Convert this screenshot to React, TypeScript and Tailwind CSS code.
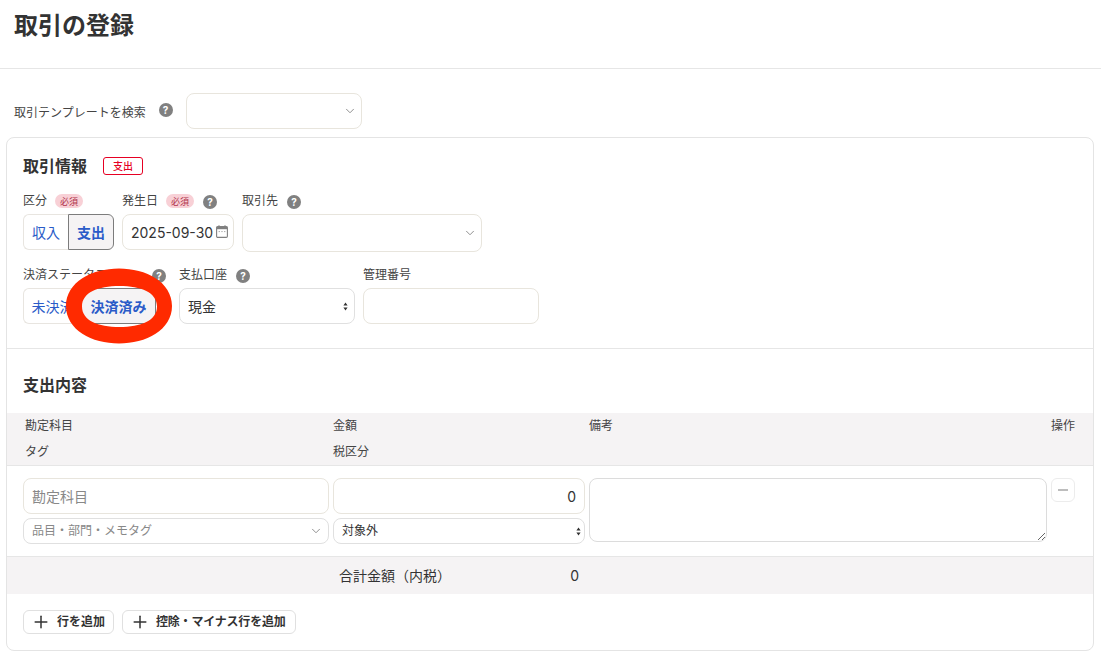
import { ChevronDown, Plus } from "lucide-react";

const Help = (props: { className?: string }) => {
    return (
        <span className={"flex h-[14px] w-[14px] shrink-0 items-center justify-center rounded-full bg-[#808080] text-[10px] font-bold leading-none text-white " + (props.className ?? "")}>?</span>
    )
}

const Required = () => {
    return <span className="flex h-[14px] w-[28px] items-center justify-center rounded-full bg-[#f8d0d6] text-[9px] leading-none text-[#b0324a]">必須</span>
}

const Updown = () => {
    return (
        <svg width="5" height="9" viewBox="0 0 5 9" className="shrink-0">
            <path d="M2.5 0.5 L4.6 3.5 H0.4 Z M2.5 8.5 L0.4 5.5 H4.6 Z" fill="#333" />
        </svg>
    )
}

const Calendar = () => {
    return (
        <svg width="12" height="13" viewBox="0 0 12 13" className="absolute right-[5px] top-[10px]" fill="none">
            <rect x="0.6" y="1.6" width="10.8" height="10.8" rx="1.2" stroke="#808080" strokeWidth="1.1" />
            <rect x="0.6" y="1.6" width="10.8" height="2.6" fill="#808080" />
            <path d="M3 0.3v2M9 0.3v2" stroke="#808080" strokeWidth="1.1" />
            <path d="M2.6 6.6h1.4M5.3 6.6h1.4M8 6.6h1.4" stroke="#aaa" strokeWidth="1" />
        </svg>
    )
}

const Segment = (props: { left: string, right: string, leftW: string, rightW: string }) => {
    return (
        <div className="flex h-[36px] text-[14px] text-[#2a5bc8]">
            <div className={"flex items-center justify-center rounded-l-[6px] border border-r-0 border-[#e8e5e0] bg-white " + props.leftW}>{props.left}</div>
            <div className={"flex items-center justify-center rounded-r-[6px] border border-[#7c7c7c] bg-[#f5f3f4] font-bold " + props.rightW}>{props.right}</div>
        </div>
    )
}

const Label = (props: { text: string, required?: boolean, help?: boolean, w: string }) => {
    return (
        <div className={"flex h-[14px] items-center text-[12px] leading-none text-[#444] " + props.w}>
            <span>{props.text}</span>
            {props.required && <span className="ml-[8px]"><Required /></span>}
            {props.help && <Help className="ml-[9px] mt-[2px]" />}
        </div>
    )
}

const App = () => {
    return (
        <div className="relative h-[662px] w-[1101px] overflow-hidden bg-white text-[#333]" style={{ fontFamily: 'Inter, "Noto Sans CJK JP", sans-serif' }}>
            <div className="h-[69px] border-b border-[#e6e6e6] pl-[14px] pt-[9px]">
                <h1 className="text-[24px] font-bold leading-[34px] text-[#333]">取引の登録</h1>
            </div>

            <div className="mt-[24px] flex h-[36px] items-center pl-[14px]">
                <span className="mt-[4px] text-[12px] text-[#444]">取引テンプレートを検索</span>
                <Help className="ml-[13px] mt-[-2px]" />
                <div className="ml-[13px] flex h-[36px] w-[176px] items-center justify-end rounded-[8px] border border-[#e8e5dd] pr-[4px]">
                    <ChevronDown size={14} strokeWidth={1.5} color="#808080" />
                </div>
            </div>

            <div className="ml-[6px] mt-[8px] h-[514px] w-[1088px] rounded-[8px] border border-[#e4e4e4]">
                <div className="h-[211px] border-b border-[#e6e6e6] pl-[16px] pt-[17px]">
                    <div className="flex h-[22px] items-center">
                        <span className="text-[16px] font-bold leading-none">取引情報</span>
                        <span className="ml-[16px] flex h-[18px] w-[40px] items-center justify-center rounded-[3px] border border-[#e60023] text-[10px] font-medium leading-none text-[#e60023]">支出</span>
                    </div>

                    <div className="mt-[17px] flex">
                        <Label text="区分" required w="w-[99px]" />
                        <Label text="発生日" required help w="w-[120px]" />
                        <Label text="取引先" help w="w-[200px]" />
                    </div>
                    <div className="mt-[6px] flex h-[36px] items-start gap-[8px]">
                        <Segment left="収入" right="支出" leftW="w-[45px]" rightW="w-[46px]" />
                        <div className="relative flex h-[36px] w-[112px] items-center rounded-[8px] border border-[#e8e5dd] pl-[8px] text-[14px]">
                            2025-09-30
                            <Calendar />
                        </div>
                        <div className="flex h-[38px] w-[240px] shrink-0 items-center justify-end rounded-[8px] border border-[#e8e5dd] pr-[4px]">
                            <ChevronDown size={14} strokeWidth={1.5} color="#808080" />
                        </div>
                    </div>

                    <div className="mt-[18px] flex">
                        <Label text="決済ステータス" help w="w-[156px] [&>span:first-child]:w-[120px]" />
                        <Label text="支払口座" help w="w-[184px]" />
                        <Label text="管理番号" w="w-[170px]" />
                    </div>
                    <div className="mt-[6px] flex">
                        <Segment left="未決済" right="決済済み" leftW="w-[58px]" rightW="w-[75px]" />
                        <div className="ml-[23px] flex h-[36px] w-[176px] items-center justify-between rounded-[8px] border border-[#e0e0e0] pl-[8px] pr-[6px] text-[14px]">
                            現金
                            <Updown />
                        </div>
                        <div className="ml-[8px] h-[36px] w-[176px] rounded-[8px] border border-[#e8e5dd]"></div>
                    </div>
                </div>

                <div className="flex h-[64px] items-center pl-[16px] pt-[8px]">
                    <h2 className="text-[16px] font-bold leading-none">支出内容</h2>
                </div>

                <div className="grid h-[53px] grid-cols-[306px_252px_458px_24px] grid-rows-[26px_26px] gap-x-[4px] border-b border-[#e6e6e6] bg-[#f5f3f4] px-[16px] text-[12px] leading-none text-[#444]">
                    <div className="flex items-center pl-[2px]">勘定科目</div>
                    <div className="flex items-center">金額</div>
                    <div className="flex items-center">備考</div>
                    <div className="flex items-center justify-end whitespace-nowrap">操作</div>
                    <div className="flex items-center pl-[2px]">タグ</div>
                    <div className="flex items-center">税区分</div>
                </div>

                <div className="grid h-[91px] grid-cols-[306px_252px_458px_24px] gap-x-[4px] border-b border-[#e6e6e6] px-[16px] pt-[12px]">
                    <div className="flex flex-col gap-[4px]">
                        <input placeholder="勘定科目" className="h-[36px] rounded-[8px] border border-[#e8e5dd] px-[8px] text-[14px] outline-none placeholder:text-[#888]" />
                        <div className="flex h-[26px] items-center justify-between rounded-[8px] border border-[#e0e0e0] pl-[8px] pr-[5px] text-[12px] text-[#888]">
                            品目・部門・メモタグ
                            <ChevronDown size={14} strokeWidth={1.5} color="#808080" />
                        </div>
                    </div>
                    <div className="flex flex-col gap-[4px]">
                        <input readOnly value="0" className="h-[36px] rounded-[8px] border border-[#e8e5dd] px-[8px] text-right text-[14px] outline-none" />
                        <div className="flex h-[26px] items-center justify-between rounded-[8px] border border-[#e0e0e0] pl-[8px] pr-[3px] text-[12px]">
                            対象外
                            <Updown />
                        </div>
                    </div>
                    <textarea className="h-[64px] w-[458px] rounded-[8px] border border-[#dcdcdc] outline-none"></textarea>
                    <button className="flex h-[24px] w-[24px] items-center justify-center rounded-[6px] border border-[#ececec]">
                        <span className="h-[1.5px] w-[10px] bg-[#bdbdbd]"></span>
                    </button>
                </div>

                <div className="grid h-[37px] grid-cols-[306px_252px] gap-x-[4px] bg-[#f5f3f4] px-[16px] text-[14px]">
                    <div className="col-start-2 flex items-center justify-between pr-[6px]">
                        <span className="ml-[6px]">合計金額（内税）</span>
                        <span>0</span>
                    </div>
                </div>

                <div className="mt-[16px] flex gap-[8px] pl-[16px] text-[12px] font-bold">
                    <button className="flex h-[24px] w-[91px] items-center rounded-[6px] border border-[#e0e0e0] pl-[7px]">
                        <Plus size={20} strokeWidth={1.8} />
                        <span className="ml-[6px]">行を追加</span>
                    </button>
                    <button className="flex h-[24px] w-[174px] items-center rounded-[6px] border border-[#e0e0e0] pl-[7px]">
                        <Plus size={20} strokeWidth={1.8} />
                        <span className="ml-[6px] tracking-[-0.2px]">控除・マイナス行を追加</span>
                    </button>
                </div>
            </div>

            {/* hand drawn marker on the screenshot */}
            <svg width="110" height="82" viewBox="0 0 110 82" className="absolute left-[64px] top-[265px]">
                <path
                    fillRule="evenodd"
                    fill="#ff2a00"
                    d="M2 41C2 17 28 3.5 55 3.5C82 3.5 108 17 108 41C108 65 82 78.5 55 78.5C28 78.5 2 65 2 41Z M18 41.5C18 27.5 34 21 55.5 21C77 21 93 27.5 93 41.5C93 55.5 77 62 55.5 62C34 62 18 55.5 18 41.5Z"
                />
            </svg>
        </div>
    )
}

export default App;
